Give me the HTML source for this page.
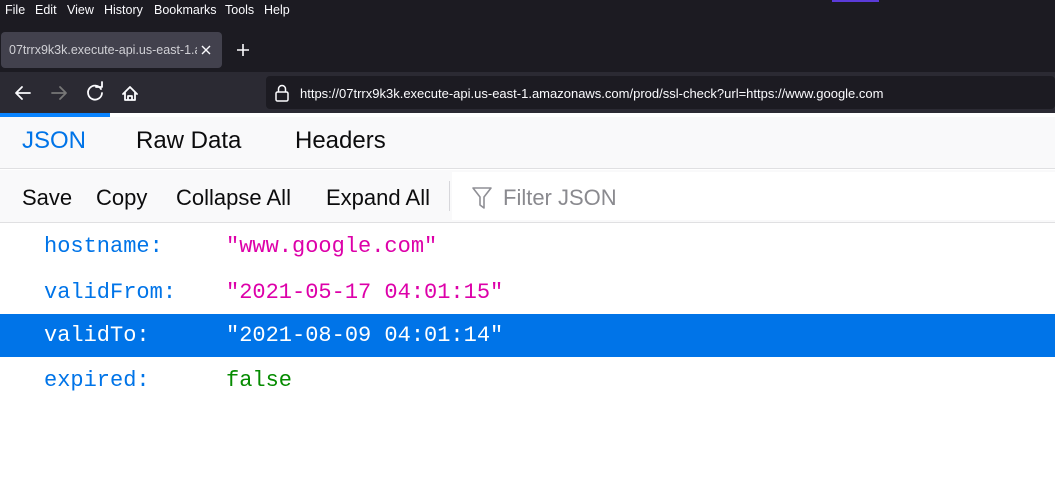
<!DOCTYPE html>
<html><head><meta charset="utf-8"><style>
*{margin:0;padding:0;box-sizing:border-box}
body{width:1055px;height:477px;overflow:hidden;background:#fff;font-family:"Liberation Sans",sans-serif;position:relative}
.abs{position:absolute}
#menu{top:0;left:0;width:1055px;height:22px;background:#1c1b22;color:#fbfbfe;font-size:12.5px}
#menu span{position:absolute;top:3px}
#tabs{top:22px;left:0;width:1055px;height:50px;background:#1c1b22}
#tab{top:32px;left:1px;width:221px;height:36px;background:#42414d;border-radius:4px}
#tabt{top:32px;left:9px;width:188px;height:36px;color:#d0d0d5;font-size:12.5px;line-height:36px;overflow:hidden;white-space:nowrap}
#nav{top:72px;left:0;width:1055px;height:41px;background:#2b2a33}
#url{top:76px;left:266px;width:789px;height:33px;background:#1c1b22;border-radius:4px;color:#fbfbfe;font-size:13px;line-height:36px;padding-left:34px}
#jtabs span{position:absolute;font-size:24px;color:#0c0c0d}
#tb{top:170px;left:0;width:1055px;height:53px;background:#f9f9fa;border-bottom:1px solid #e0e0e2}
#tb span{position:absolute;top:15px;font-size:22px;color:#0c0c0d}
#filter{top:172px;left:452px;width:603px;height:48px;background:#fff}
.row{position:absolute;left:0;width:1055px;height:44px;font-family:"Liberation Mono",monospace;font-size:22px;line-height:44px}
.k{position:absolute;left:44px;color:#0074e8}
.v{position:absolute;left:226px}
</style></head><body>
<div id="menu" class="abs"><span style="left:5px">File</span><span style="left:35px">Edit</span><span style="left:67px">View</span><span style="left:104px">History</span><span style="left:154px">Bookmarks</span><span style="left:225px">Tools</span><span style="left:264px">Help</span>
<div class="abs" style="left:832px;top:0;width:47px;height:2px;background:#5b3bd9"></div></div>
<div id="tabs" class="abs"></div>
<div id="tab" class="abs"></div>
<div id="tabt" class="abs">07trrx9k3k.execute-api.us-east-1.amazo</div>
<svg class="abs" style="left:200px;top:44px" width="12" height="12" stroke="#fbfbfe" stroke-width="1.4"><path d="M2 2l8 8M10 2l-8 8"/></svg>
<svg class="abs" style="left:236px;top:43px" width="14" height="14" stroke="#fbfbfe" stroke-width="1.6"><path d="M7 1v12M1 7h12"/></svg>
<div id="nav" class="abs"></div>
<svg class="abs" style="left:0;top:72px" width="150" height="41" fill="none" stroke-width="1.8" stroke-linecap="round" stroke-linejoin="round">
<path d="M16 21h14M16 21l6-6M16 21l6 6" stroke="#fbfbfe"/>
<path d="M52 21h14M66 21l-6-6M66 21l-6 6" stroke="#777"/>
<path d="M101 17a7 7 0 1 0 1 4" stroke="#fbfbfe"/><path d="M96 15h6v-5" stroke="#fbfbfe"/>
<path d="M123 22l7-7 7 7M125 20v8h10v-8M128 28v-4h4v4" stroke="#fbfbfe"/>
</svg>
<div id="url" class="abs">https://07trrx9k3k.execute-api.us-east-1.amazonaws.com/prod/ssl-check?url=https://www.google.com</div>
<svg class="abs" style="left:274px;top:84px" width="16" height="20" fill="none" stroke="#fbfbfe" stroke-width="1.5"><rect x="2" y="8" width="12" height="9" rx="1.5"/><path d="M4.5 8V5a3.5 3.5 0 0 1 7 0v3"/></svg>
<div class="abs" style="left:0;top:113px;width:110px;height:4px;background:#0a84ff"></div>
<div id="jtabs" class="abs" style="left:0;top:117px;width:1055px;height:52px;background:#f9f9fa;border-bottom:1px solid #e0e0e2"><span style="left:22px;top:10px;color:#0074e8">JSON</span><span style="left:136px;top:10px">Raw Data</span><span style="left:295px;top:10px">Headers</span></div>
<div id="tb" class="abs"><span style="left:22px">Save</span><span style="left:96px">Copy</span><span style="left:176px">Collapse All</span><span style="left:326px">Expand All</span></div>
<div class="abs" style="left:449px;top:181px;width:1px;height:30px;background:#d7d7db"></div>
<div id="filter" class="abs"></div>
<svg class="abs" style="left:471px;top:186px" width="24" height="26" fill="none" stroke="#8f8f95" stroke-width="1.6" stroke-linejoin="round"><path d="M2 2h18l-7 9v11l-4-3v-8z"/></svg>
<div class="abs" style="left:503px;top:185px;font-size:22px;color:#8a8a8f">Filter JSON</div>
<div class="row" style="top:225px"><span class="k">hostname:</span><span class="v" style="color:#dd00a9">"www.google.com"</span></div>
<div class="row" style="top:271px"><span class="k">validFrom:</span><span class="v" style="color:#dd00a9">"2021-05-17 04:01:15"</span></div>
<div class="row" style="top:314px;height:43px;background:#0074e8"><span class="k" style="color:#fff">validTo:</span><span class="v" style="color:#fff">"2021-08-09 04:01:14"</span></div>
<div class="row" style="top:359px"><span class="k">expired:</span><span class="v" style="color:#058b00">false</span></div>
</body></html>
